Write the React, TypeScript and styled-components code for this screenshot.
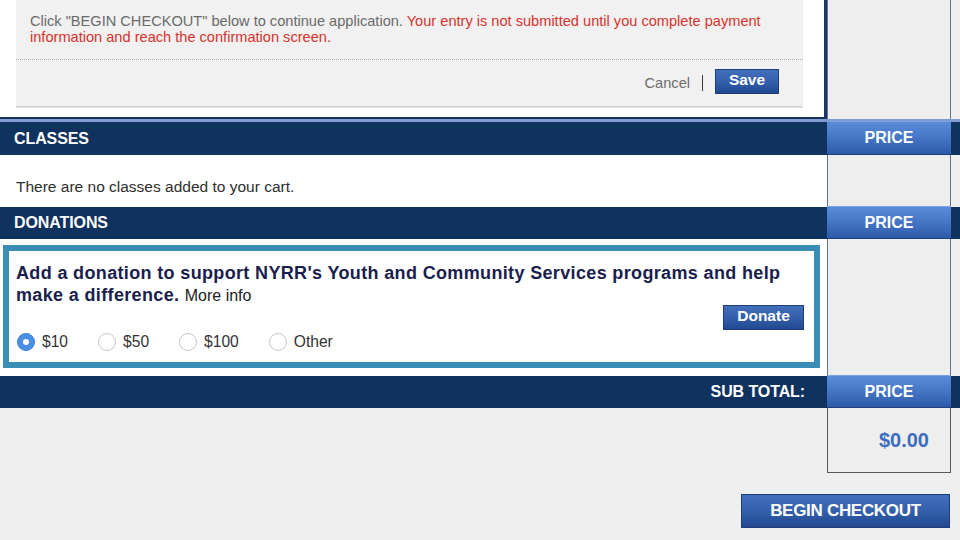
import React from "react";
import styled, { createGlobalStyle, css } from "styled-components";

const GlobalStyle = createGlobalStyle`
  html, body { margin: 0; padding: 0; background: #efefef; }
  body { font-family: "Liberation Sans", Arial, Helvetica, sans-serif; }
  * { box-sizing: border-box; }
`;

const NAVY = "#10325f";
const COL_BORDER = "#63718d";

const Page = styled.div`
  width: 960px;
  height: 540px;
  overflow: hidden;
  background: #efefef;
  color: #333;
`;

const SectionRow = styled.div<{ $height: number }>`
  display: grid;
  grid-template-columns: 827px 124px 9px;
  height: ${(p) => p.$height}px;
`;

const HeaderRow = styled(SectionRow)<{ $accent?: boolean }>`
  background: ${NAVY};
  ${(p) =>
    p.$accent &&
    css`
      border-top: 3px solid #7f9bd0;
    `}
`;

const HeaderLabel = styled.div<{ $align?: "start" | "end" }>`
  display: flex;
  align-items: center;
  justify-content: ${(p) => (p.$align === "end" ? "flex-end" : "flex-start")};
  padding: 0 22px 0 14px;
  color: #fff;
  font-weight: 700;
  font-size: 16px;
  letter-spacing: -0.1px;
`;

const PriceHead = styled.div`
  display: flex;
  align-items: center;
  justify-content: center;
  margin-top: -1px;
  background: linear-gradient(#5a8bd9 0%, #4678c7 45%, #2c5aa8 100%);
  border-top: 1px solid #7aa3e6;
  border-bottom: 1px solid #1f427f;
  color: #fff;
  font-weight: 700;
  font-size: 16px;
`;

const PriceCell = styled.div<{ $closed?: boolean }>`
  display: flex;
  align-items: center;
  justify-content: flex-end;
  padding-right: 21px;
  background: #eeeeee;
  border-left: 1px solid ${COL_BORDER};
  border-right: 1px solid ${COL_BORDER};
  ${(p) =>
    p.$closed &&
    css`
      border-left-color: #55595f;
      border-right-color: #55595f;
      border-bottom: 1px solid #55595f;
    `}
`;

const Gutter = styled.div``;

/* ---------- top notice panel ---------- */

const TopPanel = styled.div`
  background: #fff;
  padding: 0 21px 0 16px;
  border-right: 3px solid #1c3768;
  border-bottom: 2px solid #16305e;
`;

const NoticeBox = styled.div`
  background: #f1f1f1;
  border-bottom: 1px solid #cfcfcf;
  box-shadow: 0 1px 0 #e2e2e2;
`;

const NoticeText = styled.p`
  margin: 0;
  padding: 13px 14px 14px;
  font-size: 14.6px;
  line-height: 16px;
  color: #6a6a6a;
`;

const Warning = styled.span`
  color: #d8322c;
`;

const DottedRule = styled.div`
  height: 1px;
  border-top: 1px dotted #a9a9a9;
`;

const Actions = styled.div`
  display: flex;
  align-items: center;
  justify-content: flex-end;
  padding: 9px 24px 12px 0;
`;

const CancelLink = styled.span`
  font-size: 14.6px;
  color: #6d6d6d;
  margin-top: 3px;
`;

const Divider = styled.span`
  width: 1px;
  height: 16px;
  margin: 3px 12px 0 12px;
  background: #3a3a3a;
`;

const BlueButton = styled.button<{ $size?: "sm" | "lg" }>`
  border: 1px solid #1d3d7c;
  border-radius: 0;
  background: linear-gradient(#4470bb 0%, #335fab 50%, #22498f 100%);
  color: #fff;
  font-family: "Liberation Sans", Arial, Helvetica, sans-serif;
  font-weight: 700;
  cursor: pointer;
  padding: 0;
  ${(p) =>
    p.$size === "lg"
      ? css`
          width: 209px;
          height: 34px;
          font-size: 17px;
          letter-spacing: -0.3px;
        `
      : css`
          height: 25px;
          font-size: 15.5px;
          padding: 0 0 3px;
        `}
`;

/* ---------- body cells ---------- */

const WhiteCell = styled.div<{ $pad: string }>`
  background: #fff;
  padding: ${(p) => p.$pad};
`;

const EmptyText = styled.p`
  margin: 0;
  font-size: 15.5px;
  line-height: 18px;
  color: #2e2e2e;
`;

const DonationBox = styled.div`
  height: 100%;
  border: 6px solid #3b8db5;
  padding: 11px 10px 11px 7px;
  display: flex;
  flex-direction: column;
`;

const DonationTitle = styled.p`
  margin: 0;
  font-size: 18px;
  line-height: 22px;
  font-weight: 700;
  letter-spacing: 0.35px;
  color: #1a1e4e;
`;

const MoreInfo = styled.span`
  font-weight: 400;
  font-size: 16px;
  letter-spacing: 0;
  color: #222;
`;

const DonateBar = styled.div`
  display: flex;
  justify-content: flex-end;
  margin-top: -2px;
`;

const RadioGroup = styled.div`
  display: flex;
  align-items: center;
  gap: 30px;
  margin-top: 3px;
  padding-left: 1px;
`;

const RadioOption = styled.label`
  display: flex;
  align-items: center;
  gap: 7px;
  font-size: 15.6px;
  color: #333;
`;

const RadioDot = styled.span<{ $checked?: boolean }>`
  position: relative;
  width: 18px;
  height: 18px;
  border-radius: 50%;
  ${(p) =>
    p.$checked
      ? css`
          background: #4b8ee6;
          border: 1px solid #3f82da;
          &::after {
            content: "";
            position: absolute;
            left: 5px;
            top: 5px;
            width: 6px;
            height: 6px;
            border-radius: 50%;
            background: #fff;
          }
        `
      : css`
          background: #fff;
          border: 1px solid #c6c6c6;
        `}
`;

const Total = styled.span`
  font-size: 20px;
  font-weight: 700;
  color: #3e6dbf;
`;

const CheckoutBar = styled.div`
  display: flex;
  justify-content: flex-end;
  padding: 21px 10px 0 0;
`;

const amounts = ["$10", "$50", "$100", "Other"];

export default function App() {
  return (
    <Page>
      <GlobalStyle />

      <SectionRow $height={119}>
        <TopPanel>
          <NoticeBox>
            <NoticeText>
              Click "BEGIN CHECKOUT" below to continue application.{" "}
              <Warning>
                Your entry is not submitted until you complete payment
                <br />
                information and reach the confirmation screen.
              </Warning>
            </NoticeText>
            <DottedRule />
            <Actions>
              <CancelLink>Cancel</CancelLink>
              <Divider />
              <BlueButton style={{ width: 64 }}>Save</BlueButton>
            </Actions>
          </NoticeBox>
        </TopPanel>
        <PriceCell />
        <Gutter />
      </SectionRow>

      <HeaderRow $height={36} $accent>
        <HeaderLabel>CLASSES</HeaderLabel>
        <PriceHead>PRICE</PriceHead>
        <Gutter />
      </HeaderRow>

      <SectionRow $height={52}>
        <WhiteCell $pad="23px 16px 0">
          <EmptyText>There are no classes added to your cart.</EmptyText>
        </WhiteCell>
        <PriceCell />
        <Gutter />
      </SectionRow>

      <HeaderRow $height={32}>
        <HeaderLabel>DONATIONS</HeaderLabel>
        <PriceHead>PRICE</PriceHead>
        <Gutter />
      </HeaderRow>

      <SectionRow $height={137}>
        <WhiteCell $pad="6px 7px 8px 3px">
          <DonationBox>
            <DonationTitle>
              Add a donation to support NYRR's Youth and Community Services programs and help
              <br />
              make a difference. <MoreInfo>More info</MoreInfo>
            </DonationTitle>
            <DonateBar>
              <BlueButton style={{ width: 81 }}>Donate</BlueButton>
            </DonateBar>
            <RadioGroup>
              {amounts.map((a, i) => (
                <RadioOption key={a}>
                  <RadioDot $checked={i === 0} />
                  {a}
                </RadioOption>
              ))}
            </RadioGroup>
          </DonationBox>
        </WhiteCell>
        <PriceCell />
        <Gutter />
      </SectionRow>

      <HeaderRow $height={32}>
        <HeaderLabel $align="end">SUB TOTAL:</HeaderLabel>
        <PriceHead>PRICE</PriceHead>
        <Gutter />
      </HeaderRow>

      <SectionRow $height={65}>
        <Gutter />
        <PriceCell $closed>
          <Total>$0.00</Total>
        </PriceCell>
        <Gutter />
      </SectionRow>

      <CheckoutBar>
        <BlueButton $size="lg">BEGIN CHECKOUT</BlueButton>
      </CheckoutBar>
    </Page>
  );
}
